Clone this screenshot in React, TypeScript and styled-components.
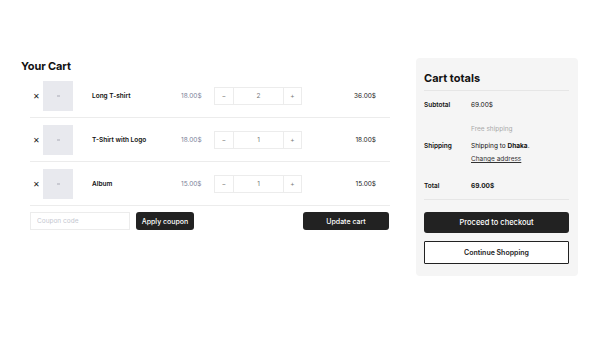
import styled, { createGlobalStyle } from "styled-components"

const Global = createGlobalStyle`
  body {
    margin: 0;
    background: #fff;
    font-family: Inter, "Noto Sans", sans-serif;
    color: #111;
  }
`

const Page = styled.div`
  width: 600px;
  height: 338px;
  display: flex;
  align-items: flex-start;
  gap: 26px;
  padding: 58px 0 0 21px;
  box-sizing: border-box;
`

const CartColumn = styled.div`
  width: 369px;
`

const Title = styled.h1`
  font-size: 11px;
  font-weight: 700;
  margin: 1px 0 0;
  line-height: 14px;
  letter-spacing: -0.1px;
`

const Rows = styled.div`
  margin: 1px 0 0 9px;
`

const Row = styled.div`
  display: grid;
  grid-template-columns: 13px 30px 19px 89px 33px 88px 1fr;
  align-items: center;
  height: 44px;
  box-sizing: border-box;
  border-bottom: 1px solid #ececec;
  font-size: 6.5px;
`

const Remove = styled.span`
  font-size: 8px;
  padding-left: 3px;
  color: #222;
`

const Thumb = styled.div`
  width: 30px;
  height: 30px;
  background: #e8e9ee;
  display: flex;
  align-items: center;
  justify-content: center;

  &::after {
    content: "";
    width: 3px;
    height: 2px;
    background: #c9cad2;
  }
`

const Name = styled.span`
  grid-column: 4;
  font-weight: 600;
`

const Price = styled.span`
  color: #7a7f99;
`

const Qty = styled.div`
  display: grid;
  grid-template-columns: 18px 1fr 18px;
  height: 18px;
  border: 1px solid #ececec;
  box-sizing: border-box;
  color: #777;
  font-size: 6.5px;

  span {
    display: flex;
    align-items: center;
    justify-content: center;
  }
  span + span {
    border-left: 1px solid #ececec;
  }
`

const Total = styled.span`
  text-align: right;
  padding-right: 14px;
  color: #222;
`

const Actions = styled.div`
  display: flex;
  align-items: center;
  margin: 6px 1px 0 9px;
`

const CouponInput = styled.input`
  width: 100px;
  height: 18px;
  box-sizing: border-box;
  border: 1px solid #ececec;
  font-family: inherit;
  font-size: 6.5px;
  padding: 0 6px;
  outline: none;

  &::placeholder {
    color: #c5c7d0;
  }
`

const DarkButton = styled.button<{ $wide?: boolean }>`
  height: ${p => (p.$wide ? "21px" : "18px")};
  padding: 0;
  background: #222;
  color: #fff;
  border: none;
  border-radius: 3px;
  font-family: inherit;
  font-size: ${p => (p.$wide ? "7.5px" : "7px")};
  font-weight: 500;
  white-space: nowrap;
  width: ${p => (p.$wide ? "100%" : "auto")};
`

const ApplyButton = styled(DarkButton)`
  margin-left: 6px;
  width: 58px;
`

const UpdateButton = styled(DarkButton)`
  margin-left: auto;
  width: 86px;
`

const Panel = styled.aside`
  width: 162px;
  background: #f5f5f5;
  border-radius: 4px;
  padding: 13px 9px 12px 8px;
  box-sizing: border-box;
`

const PanelTitle = styled.h2`
  font-size: 11px;
  font-weight: 700;
  margin: 0;
  line-height: 14px;
  padding-bottom: 5px;
  border-bottom: 1px solid #e6e6e6;
`

const Line = styled.div<{ $pad?: string }>`
  display: grid;
  grid-template-columns: 47px 1fr;
  align-items: center;
  font-size: 6.5px;
  padding: ${p => p.$pad ?? "0"};
`

const Label = styled.span<{ $shift?: number }>`
  font-weight: 600;
  margin-top: ${p => p.$shift ?? 0}px;
`

const Stack = styled.div`
  display: flex;
  flex-direction: column;
  gap: 5px;
  line-height: 8px;
`

const Muted = styled.span`
  color: #aaa;
  margin-bottom: 4px;
`

const LinkText = styled.span`
  text-decoration: underline;
  color: #333;
`

const Divided = styled.div`
  border-bottom: 1px solid #e6e6e6;
  padding-bottom: 9px;
`

const Buttons = styled.div`
  display: flex;
  flex-direction: column;
  gap: 8px;
  margin-top: 12px;
`

const OutlineButton = styled.button`
  height: 23px;
  width: 100%;
  background: #fff;
  border: 1px solid #222;
  border-radius: 1px;
  font-family: inherit;
  font-size: 7px;
  font-weight: 600;
  color: #222;
`

const items = [
  { name: "Long T-shirt", price: "18.00$", qty: 2, total: "36.00$" },
  { name: "T-Shirt with Logo", price: "18.00$", qty: 1, total: "18.00$" },
  { name: "Album", price: "15.00$", qty: 1, total: "15.00$" }
]

export default function App() {
  return (
    <>
      <Global />
      <Page>
        <CartColumn>
          <Title>Your Cart</Title>
          <Rows>
            {items.map(item => (
              <Row key={item.name}>
                <Remove>✕</Remove>
                <Thumb />
                <Name>{item.name}</Name>
                <Price>{item.price}</Price>
                <Qty>
                  <span>−</span>
                  <span>{item.qty}</span>
                  <span>+</span>
                </Qty>
                <Total>{item.total}</Total>
              </Row>
            ))}
          </Rows>
          <Actions>
            <CouponInput placeholder="Coupon code" />
            <ApplyButton>Apply coupon</ApplyButton>
            <UpdateButton>Update cart</UpdateButton>
          </Actions>
        </CartColumn>
        <Panel>
          <PanelTitle>Cart totals</PanelTitle>
          <Line $pad="10px 0 0">
            <Label>Subtotal</Label>
            <span>69.00$</span>
          </Line>
          <Line $pad="16px 0 0">
            <Label $shift={4}>Shipping</Label>
            <Stack>
              <Muted>Free shipping</Muted>
              <span>
                Shipping to <b>Dhaka</b>.
              </span>
              <LinkText>Change address</LinkText>
            </Stack>
          </Line>
          <Divided>
            <Line $pad="19px 0 0">
              <Label>Total</Label>
              <b>69.00$</b>
            </Line>
          </Divided>
          <Buttons>
            <DarkButton $wide>Proceed to checkout</DarkButton>
            <OutlineButton>Continue Shopping</OutlineButton>
          </Buttons>
        </Panel>
      </Page>
    </>
  )
}
